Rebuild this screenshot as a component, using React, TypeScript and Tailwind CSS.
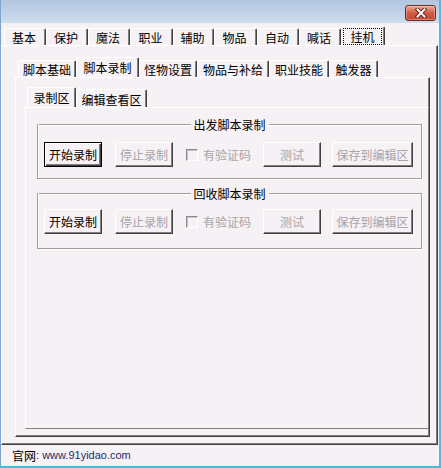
import React, { FC } from 'react'
import clsx from 'clsx'

interface TabProps {
    label: string
    className: string
    active?: boolean
    focus?: boolean
}

interface BtnProps {
    label: string
    className: string
    disabled?: boolean
    isDefault?: boolean
}

const topTabs = [
    { label: '基本', w: 'w-[42px]' },
    { label: '保护', w: 'w-[42px]' },
    { label: '魔法', w: 'w-[42px]' },
    { label: '职业', w: 'w-[43px]' },
    { label: '辅助', w: 'w-[41px]' },
    { label: '物品', w: 'w-[43px]' },
    { label: '自动', w: 'w-[42px]' },
    { label: '喊话', w: 'w-[42px]' },
]

const scriptTabs = [
    { label: '脚本基础', w: 'w-[58px] h-[17px]' },
    { label: '脚本录制', w: 'w-[63px] h-[20px]', active: true },
    { label: '怪物设置', w: 'w-[58px] h-[17px]' },
    { label: '物品与补给', w: 'w-[72px] h-[17px]' },
    { label: '职业技能', w: 'w-[60px] h-[17px]' },
    { label: '触发器', w: 'w-[49px] h-[17px]' },
]

const Tab: FC<TabProps> = ({ label, className, active, focus }) => (
    <div
        className={clsx(
            'flex shrink-0 items-center justify-center whitespace-nowrap rounded-t-[2px] border-t border-l border-r border-t-white border-l-white border-r-[#404040] shadow-[inset_-1px_0_0_#808080]',
            active && 'relative z-10 bg-[#f5f1f5]',
            className
        )}
    >
        {focus ? (
            <span className="flex h-full flex-1 items-center justify-center mr-[2px] mb-[1px] border border-dotted border-black">{label}</span>
        ) : (
            label
        )}
    </div>
)

const Btn: FC<BtnProps> = ({ label, className, disabled, isDefault }) => (
    <div
        className={clsx(
            'flex h-[25px] shrink-0 items-center justify-center whitespace-nowrap',
            isDefault
                ? 'border border-black shadow-[inset_1px_1px_0_#fff,inset_-1px_-1px_0_#404040,inset_-2px_-2px_0_#808080]'
                : 'border border-t-white border-l-white border-r-[#404040] border-b-[#404040] shadow-[inset_-1px_-1px_0_#808080]',
            disabled ? 'text-[#a8a4a8]' : 'text-black',
            className
        )}
    >
        {label}
    </div>
)

const GroupLine = () => <div className="mt-[6px] h-[2px] flex-1 border-t border-b border-t-[#a09ca0] border-b-white" />

const RecordGroup: FC<{ title: string; className: string; bodyClass: string }> = ({ title, className, bodyClass }) => (
    <div className={clsx('ml-[11px] mr-[6px] flex flex-col', className)}>
        <div className="flex h-[13px] items-start">
            <GroupLine />
            <span className="px-[3px] leading-[13px]">{title}</span>
            <GroupLine />
        </div>
        <div
            className={clsx(
                '-mt-[7px] flex items-center pl-[6px] border-l border-r border-b border-[#a09ca0] shadow-[inset_1px_0_0_#fff,1px_1px_0_#fff]',
                bodyClass
            )}
        >
            <Btn label="开始录制" className="w-[58px]" isDefault={title === '出发脚本录制'} />
            <Btn label="停止录制" className="ml-[13px] w-[58px]" disabled />
            <div className="ml-[13px] flex items-center gap-[5px] text-[#a8a4a8]">
                <span className="h-[12px] w-[12px] border border-t-[#8a868a] border-l-[#8a868a] border-r-white border-b-white shadow-[inset_1px_1px_0_#c8c4c8]" />
                <span className="w-[48px] whitespace-nowrap">有验证码</span>
            </div>
            <Btn label="测试" className="ml-[12px] w-[58px]" disabled />
            <Btn label="保存到编辑区" className="ml-[11px] w-[81px]" disabled />
        </div>
    </div>
)

const App: FC = () => {
    return (
        <div className="flex h-[468px] w-[441px] flex-col overflow-hidden border-l border-r-2 border-b-2 border-l-[#7fa4cf] border-r-[#5cb6de] border-b-[#38bde2] bg-[#f5f1f5] text-[12px] leading-[13px] text-black font-['Noto_Sans_CJK_SC','Noto_Sans',sans-serif]">
            {/* title bar */}
            <div className="flex h-[23px] shrink-0 items-start justify-end bg-gradient-to-b from-[#b2c6df] to-[#cfdcee]">
                <div className="mt-[5px] mr-[3px] flex h-[16px] w-[31px] items-center justify-center rounded-[3px] border border-[#702a20] bg-gradient-to-b from-[#eaa894] via-[#d25a42] to-[#c44a34] shadow-[inset_0_0_0_1px_rgba(255,255,255,0.3)]">
                    <svg width="12" height="10" viewBox="0 0 12 10">
                        <path d="M2.5 1.5 L9.5 8.5 M9.5 1.5 L2.5 8.5" stroke="#5a1a12" strokeWidth="3.8" strokeLinecap="square" />
                        <path d="M2.5 1.5 L9.5 8.5 M9.5 1.5 L2.5 8.5" stroke="#ffffff" strokeWidth="2" strokeLinecap="square" />
                    </svg>
                </div>
            </div>

            {/* main tabs */}
            <div className="flex h-[22px] shrink-0 items-end pl-[3px]">
                {topTabs.map((t, key) => (
                    <Tab key={key} label={t.label} className={clsx('h-[17px] pr-[2px]', t.w)} />
                ))}
                <Tab label="挂机" className="h-[19px] w-[44px] pt-[1px] pl-[1px]" active focus />
            </div>

            {/* 挂机 page */}
            <div className="mr-[1px] flex h-[400px] shrink-0 flex-col border-t border-l border-r border-b border-t-white border-l-white border-r-[#404040] border-b-[#404040] shadow-[inset_-1px_-1px_0_#808080]">
                <div className="flex h-[31px] shrink-0 items-end pl-[16px]">
                    {scriptTabs.map((t, key) => (
                        <Tab key={key} label={t.label} className={t.w} active={t.active} />
                    ))}
                </div>

                {/* 脚本录制 page */}
                <div className="ml-[13px] mr-[7px] mb-[7px] flex flex-1 flex-col border-t border-l border-r border-b border-t-white border-l-white border-r-[#404040] border-b-[#404040] shadow-[inset_-1px_-1px_0_#808080]">
                    <div className="flex h-[29px] shrink-0 items-end pl-[11px]">
                        <Tab label="录制区" className="h-[20px] w-[49px] pb-[1px]" active />
                        <Tab label="编辑查看区" className="h-[18px] w-[71px] pt-[1px]" />
                    </div>

                    {/* 录制区 page */}
                    <div className="ml-[9px] mb-[7px] flex flex-1 flex-col border-t border-l border-r border-b border-t-white border-l-white border-r-[#808080] border-b-[#808080]">
                        <RecordGroup title="出发脚本录制" className="mt-[10px]" bodyClass="pt-[18px] pb-[11px]" />
                        <RecordGroup title="回收脚本录制" className="mt-[8px]" bodyClass="pt-[16px] pb-[14px]" />
                    </div>
                </div>
            </div>

            {/* status bar */}
            <div className="flex flex-1 items-center pl-[11px] pb-[1px]">
                <span>官网</span>
                <span className="text-[11px] text-[#1b2d6b] font-['Liberation_Sans',sans-serif]">: www.91yidao.com</span>
            </div>
        </div>
    )
}

export default App
